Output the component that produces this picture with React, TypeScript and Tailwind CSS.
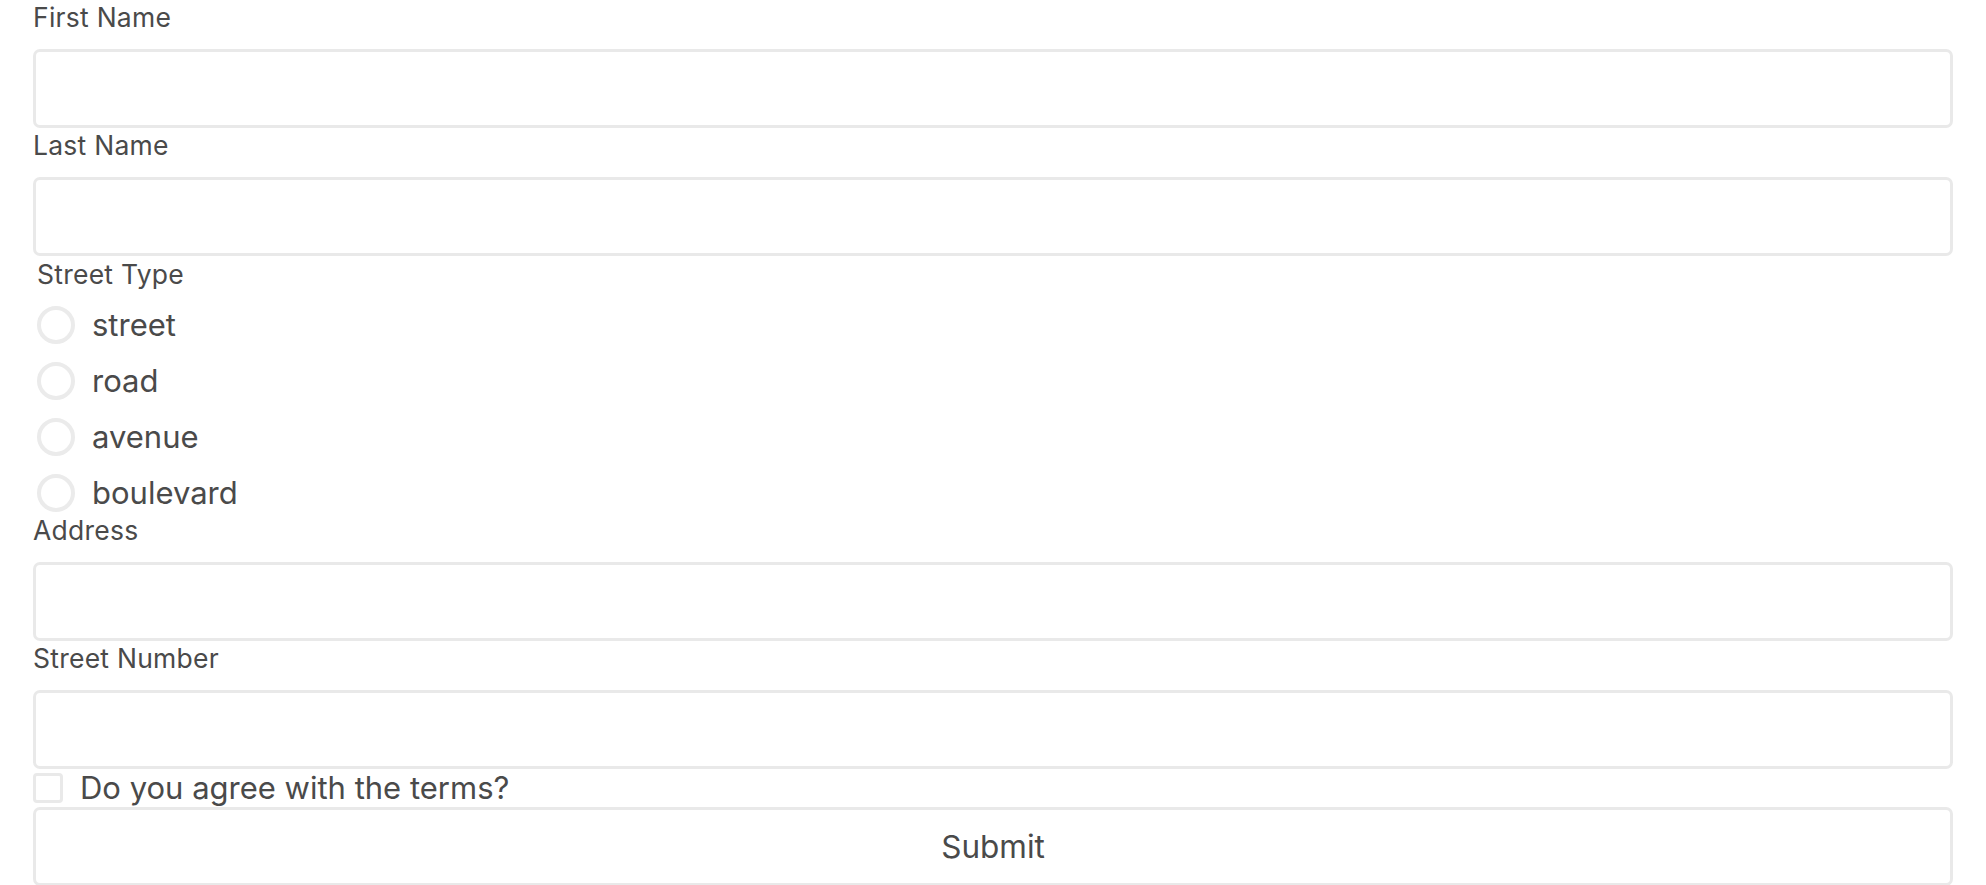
import React from "react";

const font = { fontFamily: "Inter, 'Noto Sans', sans-serif" };

function Label({ children }: { children: React.ReactNode }) {
  return (
    <div className="h-[30px] leading-[30px] text-[26.5px] tracking-[0.25px] text-[#4a4a4a] mt-[2px] mb-[17px]">
      {children}
    </div>
  );
}

function Input() {
  return (
    <input
      type="text"
      className="block w-full h-[79px] border-[3px] border-[#e9e9e9] rounded-[7px] bg-white outline-none"
    />
  );
}

export default function App() {
  const types = ["street", "road", "avenue", "boulevard"];
  return (
    <div className="w-[1986px] h-[885px] bg-white overflow-hidden" style={font}>
      <div className="flex flex-col pl-[33px] w-[1953px]">
        <Label>First Name</Label>
        <Input />
        <Label>Last Name</Label>
        <Input />
        <div className="h-[30px] leading-[30px] text-[26.5px] tracking-[0.25px] text-[#4a4a4a] mt-[3px] mb-[1px] pl-[4px]">
          Street Type
        </div>
        <div className="flex flex-col gap-[12px] mt-[13px] pl-[4px]">
          {types.map((t) => (
            <label key={t} className="flex items-center h-[44px] gap-[17px]">
              <span className="w-[38px] h-[38px] rounded-full border-[4px] border-[#ebebeb] bg-white shrink-0" />
              <span className="text-[31px] text-[#4a4a4a] leading-[44px]">{t}</span>
            </label>
          ))}
        </div>
        <div className="h-[30px] leading-[30px] text-[26.5px] tracking-[0.25px] text-[#4a4a4a] mt-[0px] mb-[17px]">
          Address
        </div>
        <Input />
        <Label>Street Number</Label>
        <Input />
        <label className="flex items-center h-[30px] mt-[4px] gap-[17px]">
          <span className="w-[30px] h-[30px] border-[3px] border-[#e9e9e9] rounded-[4px] bg-white shrink-0" />
          <span className="text-[31px] text-[#4a4a4a] leading-[30px]">Do you agree with the terms?</span>
        </label>
        <button
          type="button"
          className="mt-[4px] w-full h-[79px] border-[3px] border-[#e9e9e9] rounded-[7px] bg-white text-[31.5px] text-[#4a4a4a]"
        >
          Submit
        </button>
      </div>
    </div>
  );
}
